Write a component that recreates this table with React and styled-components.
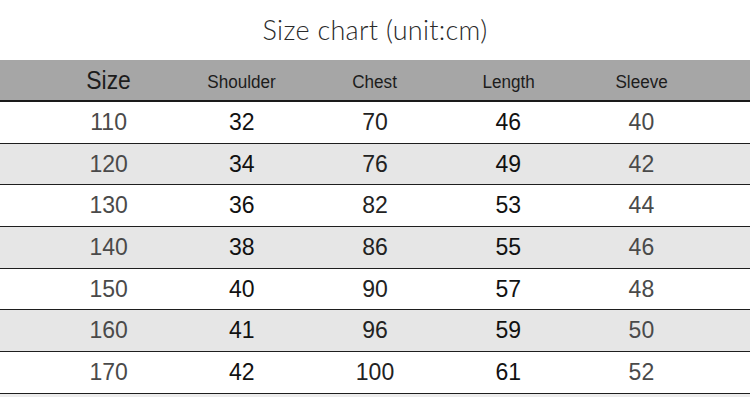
import React from "react";
import styled, { createGlobalStyle } from "styled-components";

const rows = [
  ["110", "32", "70", "46", "40"],
  ["120", "34", "76", "49", "42"],
  ["130", "36", "82", "53", "44"],
  ["140", "38", "86", "55", "46"],
  ["150", "40", "90", "57", "48"],
  ["160", "41", "96", "59", "50"],
  ["170", "42", "100", "61", "52"]
];

const headers = ["Size", "Shoulder", "Chest", "Length", "Sleeve"];

// per column ink colour, the size & sleeve columns are lighter in the chart
const tones = ["#4a4a4a", "#111", "#222", "#111", "#4a4a4a"];

const App = () => {
  return (
    <>
      <GlobalStyle />
      <Page>
        <Title>Size chart (unit:cm)</Title>
        <Table>
          <HeaderRow>
            {headers.map((h, i) => (
              <HeadCell key={h} big={i === 0}>
                {h}
              </HeadCell>
            ))}
          </HeaderRow>
          {rows.map((row, r) => (
            <Row key={row[0]} shaded={r % 2 === 1}>
              {row.map((v, c) => (
                <Cell key={c} tone={tones[c]}>
                  {v}
                </Cell>
              ))}
            </Row>
          ))}
        </Table>
        <Foot />
      </Page>
    </>
  );
};

const GlobalStyle = createGlobalStyle`
  html, body {
    margin: 0;
    padding: 0;
    background: #fff;
  }
`;

const Page = styled.div`
  width: 750px;
  height: 419px;
  background: #fff;
  overflow: hidden;
`;

const Title = styled.h1`
  margin: 0;
  height: 60px;
  display: flex;
  align-items: center;
  justify-content: center;
  padding-bottom: 2px;
  box-sizing: border-box;
  font-family: "Lato", "DejaVu Sans", sans-serif;
  font-weight: 300;
  font-size: 27px;
  color: #2a2a2a;
  letter-spacing: 0.3px;
`;

const Table = styled.div`
  display: flex;
  flex-direction: column;
`;

const HeaderRow = styled.div`
  display: grid;
  grid-template-columns: repeat(5, 1fr);
  padding: 0 42px;
  height: 42px;
  box-sizing: border-box;
  background: #a6a6a6;
  border-bottom: 2px solid #1a1a1a;
`;

const HeadCell = styled.div`
  display: flex;
  align-items: center;
  justify-content: center;
  padding-top: ${({ big }) => (big ? "0" : "4px")};
  font-family: "Liberation Sans", Arial, sans-serif;
  font-size: ${({ big }) => (big ? "26px" : "18px")};
  color: #1c1c1c;
  transform: scaleX(${({ big }) => (big ? 0.88 : 0.95)});
`;

const Row = styled.div`
  display: grid;
  grid-template-columns: repeat(5, 1fr);
  padding: 0 42px;
  height: 41.7px;
  box-sizing: border-box;
  background: ${({ shaded }) => (shaded ? "#e6e6e6" : "#fff")};
  border-bottom: 1.5px solid #1e1e1e;
`;

const Cell = styled.div`
  display: flex;
  align-items: center;
  justify-content: center;
  font-family: "Liberation Sans", Arial, sans-serif;
  font-size: 23px;
  color: ${({ tone }) => tone};
`;

const Foot = styled.div`
  height: 3px;
  background: #ececec;
`;

export default App;
